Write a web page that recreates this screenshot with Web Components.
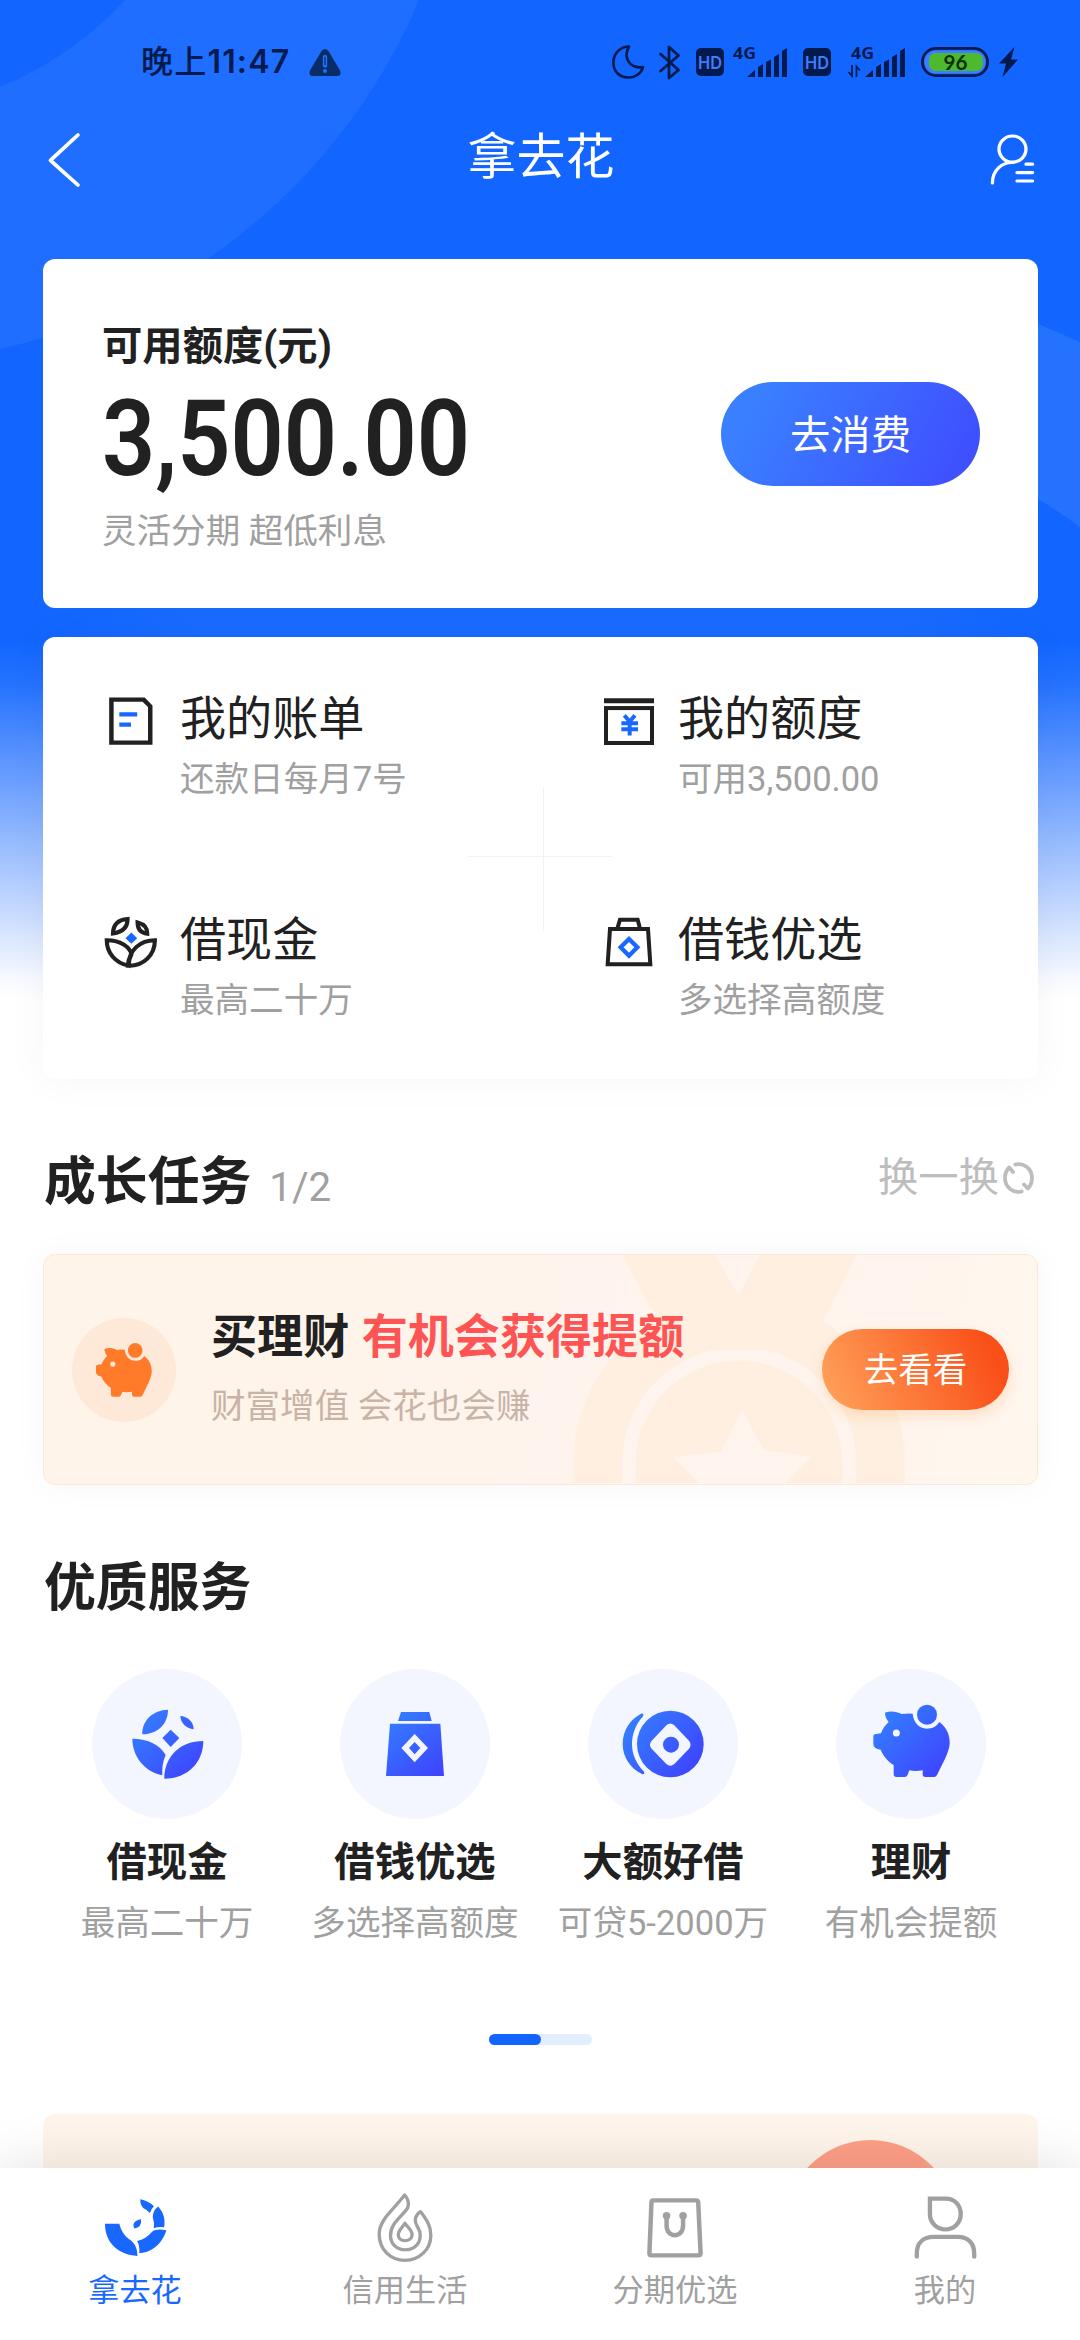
<!DOCTYPE html>
<html lang="zh-CN">
<head>
<meta charset="utf-8">
<title>拿去花</title>
<style>
html,body{margin:0;padding:0;background:#fff}
body{font-family:Roboto,"Noto Sans CJK SC",sans-serif;color:#212121;width:1080px;height:2340px;overflow:hidden}
</style>
</head>
<body>
<app-shell>
  <status-bar></status-bar>
  <nav-header>拿去花</nav-header>
  <credit-card label="可用额度(元)" amount="3,500.00" note="灵活分期 超低利息">去消费</credit-card>
  <feature-grid>
    <feature-item icon="bill" heading="我的账单">还款日每月7号</feature-item>
    <feature-item icon="wallet" heading="我的额度">可用3,500.00</feature-item>
    <feature-item icon="lotus" heading="借现金">最高二十万</feature-item>
    <feature-item icon="bag" heading="借钱优选">多选择高额度</feature-item>
  </feature-grid>
  <section-title class="growth" count="1/2" action="换一换">成长任务</section-title>
  <task-card heading="买理财" highlight="有机会获得提额" note="财富增值 会花也会赚">去看看</task-card>
  <section-title class="services">优质服务</section-title>
  <service-row>
    <service-item icon="lotusFill" heading="借现金">最高二十万</service-item>
    <service-item icon="bagFill" heading="借钱优选">多选择高额度</service-item>
    <service-item icon="coinFill" heading="大额好借">可贷5-2000万</service-item>
    <service-item icon="pigFill" heading="理财">有机会提额</service-item>
  </service-row>
  <page-dots></page-dots>
  <promo-card></promo-card>
  <tab-bar slot="tabs">
    <tab-item icon="tabHome" active>拿去花</tab-item>
    <tab-item icon="tabFlame">信用生活</tab-item>
    <tab-item icon="tabBag">分期优选</tab-item>
    <tab-item icon="tabUser">我的</tab-item>
  </tab-bar>
</app-shell>
<script>
const PIG = `<path d="M1035 518C1050 512 1070 514 1085 522Q1100 520 1118 521C1120 547 1138 565 1160 566C1178 566 1190 559 1198 546C1222 564 1230 588 1229 612C1226 640 1210 665 1195 697Q1190 711 1182 711H1156Q1148 711 1148 703V691Q1125 695 1108 691L1103 704Q1100 711 1094 711H1069Q1061 711 1061 703V675C1045 665 1029 648 1022 629Q1000 626 1000 612V590Q1000 582 1008 582L1023 580C1028 566 1036 555 1046 546C1040 538 1035 530 1035 518Z"/><circle cx="1161" cy="524" r="30"/>`;
const grad = (id,a,b,c,d) => `<defs><linearGradient id="${id}" gradientUnits="userSpaceOnUse" x1="${a}" y1="${b}" x2="${c}" y2="${d}"><stop offset="0" stop-color="#3380ff"/><stop offset="1" stop-color="#3f42ff"/></linearGradient></defs>`;
const svg = (w,h,vb,body,attrs='') => `<svg width="${w}" height="${h}" viewBox="${vb}" preserveAspectRatio="none" fill="none" ${attrs}>${body}</svg>`;
const HD = '<rect width="28" height="28" rx="5" fill="#021a4d"/><text x="14" y="20.500" text-anchor="middle" textLength="24" lengthAdjust="spacingAndGlyphs" font-family="Inter,sans-serif" font-weight="600" font-size="17" fill="#3f7cff">HD</text>';
const SIGNAL = '<text x="733" y="57.500" font-family="Open Sans,sans-serif" font-weight="700" font-size="15.500" textLength="23" lengthAdjust="spacingAndGlyphs" fill="#021a4d">4G</text><path fill="#021a4d" d="M747 76L755 69V76ZM758 66L763 63V76H758ZM766 61L771 58.500V76H766ZM774 56L779 53V76H774ZM782 50L787 47V76H782Z"/>';

const ICONS = {
  back: svg(32,54,'138 398 92 162','<path d="M224 404L145 480L224 554" stroke="#fff" stroke-width="11" stroke-linecap="round" stroke-linejoin="round"/>'),
  contact: svg(45,51,'1306 402 130 152','<g stroke="#fff" stroke-width="9.5" stroke-linecap="round"><circle cx="1371" cy="447" r="39"/><path d="M1313 548C1313 510 1340 486 1372 487M1410 492H1429M1384 517H1429M1384 542H1429"/></g>'),
  bill: svg(44,48,'196 200 128 144','<path d="M203 208H297L316 228V337H203Z" stroke="#212121" stroke-width="13"/><path d="M226 252H278M226 283H260" stroke="#1868ff" stroke-width="13"/>'),
  wallet: svg(50,47,'126 204 150 140','<path d="M126 212H276" stroke="#212121" stroke-width="15"/><rect x="132" y="234" width="138" height="104" stroke="#212121" stroke-width="12"/><path d="M187 256L203 274L219 256M178 279H228M178 297H228M203 272V316" stroke="#1868ff" stroke-width="12"/>'),
  lotus: svg(54,53,'185 860 156 158','<g stroke="#212121" stroke-width="12"><path d="M253 869Q254 905 211 912Q212 872 253 869ZM282 879Q311 887 310 913Q282 910 282 879ZM193 932C235 932 262 955 264 975Q256 990 256 1008C218 1000 193 970 193 932ZM332 932C332 975 300 1010 254 1008C258 960 290 932 332 932Z"/></g><path d="M264 909L281 926L264 943L247 926Z" fill="#1868ff"/>'),
  bag: svg(48,50,'130 862 144 150','<path d="M145 898H259L266 1004H138ZM168 893L175 870H228L234 893" stroke="#212121" stroke-width="12"/><path d="M202 928L227 953L202 978L177 953Z" stroke="#1868ff" stroke-width="13"/>'),
  lotusFill: svg(150,150,'156 387 450 450',grad('a',290,520,480,710)+'<path fill="url(#a)" d="M384 509C340 510 306 540 307 583C350 582 384 555 384 509ZM421 528C442 529 461 545 461 568C438 564 422 550 421 528ZM392 569L418 594L392 621L367 594ZM277 596C325 596 360 615 377 645C368 665 366 685 367 706C315 695 277 650 277 596ZM490 603C490 665 445 716 373 716C373 650 420 603 490 603Z"/>'),
  bagFill: svg(150,150,'900 387 450 450',grad('b',1050,520,1200,710)+'<path fill="url(#b)" fill-rule="evenodd" d="M1083 516H1168L1175 543H1074ZM1050 551H1201L1212 708H1038ZM1124 582L1164 624L1124 667L1084 624ZM1124 606L1141 624L1124 643L1107 624Z"/>'),
  coinFill: svg(150,150,'144 387 450 450',grad('c',265,530,470,700)+'<path fill="url(#c)" fill-rule="evenodd" d="M303 521C311 519 312 526 308 530C285 555 276 585 276 612C276 645 290 672 311 694C315 700 313 704 306 702C270 685 248 650 248 612C248 572 270 538 303 521ZM291 612a100 100 0 1 0 200 0a100 100 0 1 0 -200 0ZM380 555Q391 546 402 555L447 602Q456 614 447 626L403 672Q391 683 379 672L335 626Q325 614 335 602ZM369 614a24 24 0 1 0 48 0a24 24 0 1 0 -48 0Z"/>'),
  pigFill: svg(150,150,'888 387 450 450',grad('d',1010,520,1210,710)+`<g fill="url(#d)">${PIG}</g><circle cx="1069" cy="579" r="10.500" fill="#f3f6ff"/>`),
  pigOrange: svg(56,54,'1000 494 230 218',`<g fill="#ff7b2a">${PIG}</g><circle cx="1069" cy="579" r="10.500" fill="#fee8d7"/>`),
  refresh: svg(31,32,'0 0 31 32','<g stroke="#bdbdbd" stroke-width="3.800" stroke-linecap="round"><path d="M12.300 2.500C20 0.500 29 6 29 16C29 20 27.500 24 24.800 26.500M24.800 26.500L21 22.500M18.700 29.500C11 31.500 2 26 2 16C2 12 3.500 8 6.200 5.500M6.200 5.500L10 10"/></g>'),
  tabHome: svg(61,57,'293 623 171 172','<path fill="#1868ff" d="M293 698H333Q340 728 358 742Q384 756 384 795C330 792 293 755 293 698ZM383 750Q408 744 425 722Q436 711 465 717C455 755 425 785 389 786Q391 765 383 750ZM442 646C458 665 462 685 459 708Q440 706 430 711Q432 695 427 678Q427 658 442 646ZM392 624Q414 628 430 645Q422 654 419 665Q410 655 400 650Q391 640 392 624ZM394 684Q397 708 375 712Q366 690 394 684Z"/>'),
  tabFlame: svg(58,71,'1053 608 164 214','<g stroke="#a0a0a0" stroke-width="9.500" stroke-linejoin="round"><path d="M1134 617Q1149 635 1143 655C1130 680 1094 700 1094 738C1094 765 1112 782 1136 782C1160 782 1178 765 1178 738C1178 715 1163 710 1164 692Q1166 675 1179 667C1195 690 1208 708 1208 738C1208 782 1175 814 1135 814C1095 814 1062 782 1062 735C1062 690 1105 660 1134 617Z"/><path d="M1135 702C1142 715 1155 722 1155 737C1155 748 1146 755 1135 755C1124 755 1116 748 1116 737C1116 722 1128 715 1135 702Z"/></g>'),
  tabBag: svg(56,60,'313 620 163 179','<g stroke="#a0a0a0" stroke-width="13"><path d="M332 627H456Q461 627 462 632L469 785Q469 791 463 791H326Q320 791 320 785L326 633Q326 627 332 627Z"/><path d="M370 673V702C370 741 418 741 418 702V673"/></g><g fill="#a0a0a0"><circle cx="370" cy="673" r="11"/><circle cx="418" cy="673" r="11"/></g>'),
  tabUser: svg(63,63,'1088 625 182 188','<g stroke="#a0a0a0" stroke-width="12.500" stroke-linecap="round"><path d="M1134 633H1180C1206 633 1223 653 1223 679C1223 705 1204 725 1179 725C1154 725 1134 705 1134 679Z"/><path d="M1096 806V797C1096 765 1115 747 1145 747H1215C1243 747 1262 765 1262 797V806"/></g>'),
  warn: svg(32,27,'0 0 32 27','<path fill="#0a2c66" d="M12.500 2Q16 -2 19.500 2L31 21.500Q33 27 28 27H4Q-1 27 1 21.500Z"/><path d="M16 8V16.500" stroke="#1e6eff" stroke-width="4.400" stroke-linecap="round"/><path d="M16 8V16" stroke="#0a2c66" stroke-width="1.200"/><circle cx="16" cy="22" r="2" fill="#1e6eff"/>'),
  moon: svg(33,34,'0 0 33 34','<path stroke="#021a4d" stroke-width="2.700" stroke-linejoin="round" d="M17 1.500C10 1.500 1.400 7 1.400 17.500C1.400 27 8 32.500 16 32.500C24 32.500 29.500 28 31 22C18 24 10.500 13 17 1.500Z"/>'),
  bt: svg(21,35,'0 0 21 35','<path stroke="#021a4d" stroke-width="2.800" stroke-linejoin="round" stroke-linecap="round" d="M1.500 9L19.500 25L10 33V2L19.500 10.500L1.500 26"/>'),
  hd: svg(28,28,'0 0 28 28',HD),
  sig: svg(54,34,'733 43 54 34',SIGNAL),
  sig2: svg(58,34,'729 43 58 34',SIGNAL+'<path stroke="#021a4d" stroke-width="1.700" d="M734 64V75L730.500 71M738.500 76V65.500L742 69.500"/>'),
  battery: svg(68,30,'0 0 68 30','<rect x="1.400" y="1.400" width="65.200" height="27.200" rx="13.600" stroke="#021a4d" stroke-width="2.800"/><rect x="3.500" y="3.500" width="61" height="23" rx="11.500" fill="#3f7cff"/><rect x="8" y="6" width="54" height="18" rx="6.500" fill="#4db92c"/><text x="34.500" y="22.500" text-anchor="middle" font-family="Lato,sans-serif" font-weight="700" font-size="21.500" textLength="24" lengthAdjust="spacingAndGlyphs" fill="#08300c">96</text>'),
  bolt: svg(19,30,'0 0 19 30','<path fill="#021a4d" d="M15.500 0L0 16.500H7L3.500 30L19 12.500H12Z"/>')
};

const BASE = `<style>:host,*{box-sizing:border-box}svg{display:block;flex:none;overflow:visible}</style>`;
function component(name, render) {
  customElements.define(name, class extends HTMLElement {
    constructor() {
      super();
      this.attachShadow({mode:'open'});
    }
    connectedCallback() {
      const t = document.createElement('template');
      t.innerHTML = BASE + render(k => this.getAttribute(k) || '', this);
      this.shadowRoot.replaceChildren(t.content.cloneNode(true));
    }
  });
}

component('app-shell', () => `<style>
:host{display:flex;flex-direction:column;width:1080px;height:2340px;overflow:hidden;
background:
 linear-gradient(to bottom,rgba(255,255,255,0) 640px,rgba(255,255,255,.07) 680px,rgba(255,255,255,.97) 980px,#fff 1000px),
 radial-gradient(circle at -129px -232px,transparent 343.5px,rgba(255,255,255,.055) 344.5px,rgba(255,255,255,.055) 594.500px,transparent 595.500px),
 radial-gradient(circle at -185px 846px,transparent 401.5px,rgba(255,255,255,.08) 402.500px,rgba(255,255,255,.08) 559.500px,transparent 560.500px) right top/60px 2340px no-repeat,
 linear-gradient(to right,transparent 30px,rgba(255,255,255,.03) 200px,rgba(255,255,255,.03) 900px,transparent 1050px) 0 600px/1080px 40px no-repeat,
 #1266ff}
main{flex:1;min-height:0;overflow:hidden;display:flex;flex-direction:column}
</style><main><slot></slot></main><slot name="tabs"></slot>`);

component('status-bar', () => `<style>
:host{display:flex;height:112px;padding:12px 62px 0 141px;align-items:center;color:#021a4d;flex:none}
.time{font:500 32px/40px Inter,"Noto Sans CJK SC",sans-serif;letter-spacing:1.200px;margin-right:18px;white-space:nowrap;width:150px}
.time b{font-weight:600}
.right{display:flex;align-items:center;margin-left:auto}
.right>*{margin-left:var(--g)}
.up{margin-top:-3px}
</style><span class="time">晚上<b>11:47</b></span>${ICONS.warn}
<div class="right"><span>${ICONS.moon}</span><span style="--g:14px">${ICONS.bt}</span><span style="--g:16px">${ICONS.hd}</span><span class="up" style="--g:9px">${ICONS.sig}</span><span style="--g:16px">${ICONS.hd}</span><span class="up" style="--g:16px">${ICONS.sig2}</span><span style="--g:16px">${ICONS.battery}</span><span style="--g:10px">${ICONS.bolt}</span></div>`);

component('nav-header', () => `<style>
:host{display:flex;height:147px;padding:21px 45px 0 48px;align-items:flex-start;justify-content:space-between;flex:none}
.t{font-size:48.960px;line-height:50px;color:#fff;padding-left:12px}
.c{padding-top:1px}
</style><span>${ICONS.back}</span><span class="t"><slot></slot></span><span class="c">${ICONS.contact}</span>`);

component('credit-card', a => `<style>
:host{display:flex;justify-content:space-between;align-items:flex-start;flex:none;width:995px;height:349px;margin-left:43px;background:#fff;border-radius:12px;padding:0 58px 0 59px}
.l{display:flex;flex-direction:column;align-items:flex-start;padding-top:62px}
.label{font-size:40.320px;line-height:52px;font-weight:700;white-space:nowrap}
.amt{font-size:106px;line-height:116px;font-weight:600;transform:scaleX(.880);transform-origin:0 0;height:116px;margin-top:8px;white-space:nowrap}
.note{font-size:34.560px;line-height:46px;color:#a0a0a0;margin-top:11px}
button{border:0;margin:123px 0 0;width:259px;height:104px;border-radius:52px;background:linear-gradient(118deg,#3a7fff 15%,#3f50ff 90%);color:#fff;font:400 40.320px/104px Roboto,"Noto Sans CJK SC",sans-serif;padding:2px 0 0}
</style><div class="l"><span class="label">${a('label')}</span><span class="amt">${a('amount')}</span><span class="note">${a('note')}</span></div><button><slot></slot></button>`);

component('feature-grid', () => `<style>
:host{position:relative;display:grid;grid-template-columns:498px 1fr;grid-template-rows:221px 221px;flex:none;width:995px;height:442px;margin:29px 0 0 43px;background:#fff;border-radius:12px;box-shadow:0 0 43px rgba(0,0,0,.045)}
i{position:absolute;background:#f2f2f2}
.h{left:425px;top:219px;width:144px;height:1px}.v{left:500px;top:150px;width:1px;height:144px}
</style><slot></slot><i class="h"></i><i class="v"></i>`);

component('feature-item', a => `<style>
:host{display:flex;align-items:flex-start}
.i{width:76px;height:54px;margin:57px 0 0 48px;display:flex;align-items:center;padding-left:13px}
.ico{width:54px;display:flex;justify-content:center}
.t{display:flex;flex-direction:column;margin:55px 0 0 13px}
b{font-weight:400;font-size:46.080px;line-height:54px;white-space:nowrap}
span.s{font-size:34.560px;line-height:46px;color:#a0a0a0;margin-top:10px;white-space:nowrap}
</style><div class="i"><span class="ico">${ICONS[a('icon')]}</span></div><div class="t"><b>${a('heading')}</b><span class="s"><slot></slot></span></div>`);

component('section-title', a => `<style>
:host{display:flex;align-items:flex-start;flex:none;padding:0 46px 0 44px}
:host(.growth){height:175px;padding-top:71px}
:host(.services){height:184px;padding-top:71px}
h2{margin:0;font-size:51.840px;line-height:66px;font-weight:700}
.n{font-size:40.320px;line-height:52px;color:#a0a0a0;margin:12px 0 0 18px}
.a{margin-left:auto;display:flex;align-items:center;color:#bdbdbd;font-size:40.320px;line-height:52px;gap:4px;margin-top:2px}
</style><h2><slot></slot></h2><span class="n">${a('count')}</span>${a('action')?`<span class="a">${a('action')}${ICONS.refresh}</span>`:''}`);

component('task-card', a => `<style>
:host{display:flex;align-items:flex-start;flex:none;width:995px;height:231px;margin-left:43px;border:1.500px solid #fde8d5;border-radius:12px;padding-left:28px;box-shadow:0 0 34px rgba(0,0,0,.04);
background:linear-gradient(100deg,#fff4ea 30%,#fff4ee 60%,#fff6ee);position:relative}
.m{position:absolute;left:0;top:0;z-index:0;overflow:hidden}
.c{width:104px;height:104px;border-radius:50%;background:#fee8d7;margin-top:63px;display:flex;align-items:center;justify-content:center;flex:none}
.t{display:flex;flex-direction:column;margin:54px 0 0 35px;position:relative;z-index:1}
.t b{font-size:46.080px;line-height:56px;white-space:nowrap}.t em{font-style:normal;color:#ff5454;margin-left:1px}
.t span{font-size:34.560px;line-height:46px;color:#c8b3a6;margin-top:18px}
button{position:relative;z-index:1;border:0;margin:74px 28px 0 auto;width:187px;height:81px;border-radius:41px;padding:0;background:linear-gradient(65deg,#ff9f58 5%,#f94f18 88%);color:#fff;font:400 34.560px/80px Roboto,"Noto Sans CJK SC",sans-serif;box-shadow:0 6px 14px rgba(255,160,80,.28)}
</style>
<svg class="m" width="992" height="228" viewBox="44 1255 992 228"><g fill="#feefe1"><path d="M622 1255H715L738.600 1295L760 1255H857L823 1321L838 1331L780 1350H690L649 1306Z"/><path fill-rule="evenodd" d="M573 1464a166 166 0 0 1 332 0v30H573ZM622 1464a117 117 0 0 1 234 0v30H622Z"/><path fill-rule="evenodd" d="M635.500 1464a103.500 103.500 0 0 1 207 0v30H635.500ZM742 1410L763.500 1450L811 1457L776 1492H708L673.500 1457L721 1452Z"/></g></svg>
<div class="c">${ICONS.pigOrange}</div><div class="t"><b>${a('heading')} <em>${a('highlight')}</em></b><span>${a('note')}</span></div><button><slot></slot></button>`);

component('service-row', () => `<style>:host{display:grid;grid-template-columns:repeat(4,248px);margin-left:43px;flex:none;height:365px}</style><slot></slot>`);

component('service-item', a => `<style>
:host{display:flex;flex-direction:column;align-items:center}
.c{width:150px;height:150px;border-radius:50%;background:#f3f6ff}
b{font-size:40.320px;line-height:52px;margin-top:18px}
span{font-size:34.560px;line-height:46px;color:#a0a0a0;margin-top:11px;white-space:nowrap}
</style><div class="c">${ICONS[a('icon')]}</div><b>${a('heading')}</b><span><slot></slot></span>`);

component('page-dots', () => `<style>
:host{display:block;flex:none;width:103px;height:11px;border-radius:6px;background:#e2eefd;margin-left:489px}
i{display:block;width:52px;height:11px;border-radius:6px;background:#1266ff}
</style><i></i>`);

component('promo-card', () => `<style>
:host{display:flex;justify-content:flex-end;flex:none;width:995px;height:200px;margin:69px 0 0 43px;border-radius:12px 12px 0 0;background:#fff5ea;padding:26px 82px 0 0;overflow:hidden}
i{width:171px;height:171px;border-radius:50%;background:linear-gradient(155deg,#ff9f87 34%,#ffb592 48%)}
</style><i></i>`);

component('tab-bar', () => `<style>
:host{position:relative;display:grid;grid-template-columns:repeat(4,1fr);height:172px;flex:none;background:#fff;box-shadow:0 0 58px rgba(0,0,0,.13)}
</style><slot></slot>`);

component('tab-item', a => `<style>
:host{display:flex;flex-direction:column;align-items:center;color:#a0a0a0}
:host([active]){color:#1868ff}
.i{height:75px;margin-top:22px;display:flex;align-items:center;justify-content:center}
span{font-size:31.200px;line-height:40px;margin-top:6px;white-space:nowrap}
</style><div class="i">${ICONS[a('icon')]}</div><span><slot></slot></span>`);
</script>
</body>
</html>
